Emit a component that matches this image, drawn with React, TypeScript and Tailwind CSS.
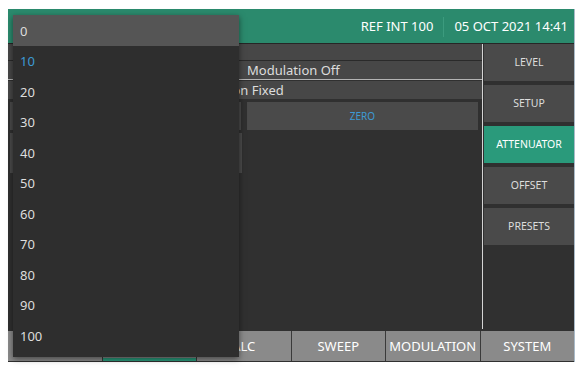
const levels = ["0", "10", "20", "30", "40", "50", "60", "70", "80", "90", "100"]

const sideButtons = ["LEVEL", "SETUP", "ATTENUATOR", "OFFSET", "PRESETS"]

// first two tabs sit under the open dropdown
const tabs = ["", "", "ALC", "SWEEP", "MODULATION", "SYSTEM"]

function AttenuationDropdown({ selected }: { selected: string }) {
  return (
    <div className="absolute left-[5px] top-[6px] w-[226px] bg-[#2e2e2e] pb-[6px] shadow-[0_2px_6px_rgba(0,0,0,0.5)]">
      {levels.map((lvl, i) => (
        <div
          key={lvl}
          className={
            "flex h-[30.5px] items-center pl-[7px] pt-[2px] text-[13px] " +
            (i === 0 ? "bg-[#555555] " : "") +
            (lvl === selected ? "text-[#3d9ad4]" : "text-[#dddddd]")
          }
        >
          {lvl}
        </div>
      ))}
    </div>
  )
}

export default function App() {
  return (
    <div className="min-h-screen bg-white pl-[8px] pt-[9px] font-['Noto_Sans',sans-serif]">
      <div className="relative flex h-[353px] w-[567px] flex-col border-r border-[#a9bac8] bg-[#303030]">
        {/* header */}
        <div className="flex h-[35px] items-center justify-end border-b border-[#262626] bg-[#2b8a6d] pr-[6px] pt-[2px] text-[13px] text-white">
          <span>REF INT 100</span>
          <span className="mx-[10px] h-[20px] w-px bg-[#3c9b7e]" />
          <span>05 OCT 2021 14:41</span>
        </div>

        {/* body */}
        <div className="flex h-[287px]">
          <div className="flex w-[474px] flex-col text-[13px] text-[#dddddd]">
            <div className="h-[17px] border-b border-[#2a2a2a] bg-[#474747]" />
            <div className="flex h-[19px] items-center border-b border-[#b4b4b4] bg-[#474747] pl-[239px] pt-px leading-none">
              Modulation Off
            </div>
            <div className="mt-px flex h-[18px] items-center bg-[#474747] pl-[168px] pt-px leading-none">
              Attenuation Fixed
            </div>
            <div className="mt-[3px] flex h-[28px] gap-[6px] pl-[2px]">
              <div className="w-[231px] bg-[#4a4a4a]" />
              <div className="flex w-[231px] items-center justify-center bg-[#4a4a4a] pt-px text-[10px] text-[#3d9ad4]">
                ZERO
              </div>
            </div>
            <div className="ml-[2px] mt-[3px] h-[40px] w-[232px] border-x-[3px] border-[#4a4a4a]" />
          </div>
          <div className="mb-[2px] w-px bg-[#d4d4d4]" />
          <div className="flex flex-1 flex-col gap-[4.5px] pl-px">
            {sideButtons.map((b) => (
              <div
                key={b}
                className={
                  "flex h-[36.5px] items-center justify-center pt-[2px] text-[10.5px] " +
                  (b === "ATTENUATOR" ? "bg-[#2a9a7b] text-white" : "bg-[#4a4a4a] text-[#dddddd]")
                }
              >
                {b}
              </div>
            ))}
          </div>
        </div>

        {/* bottom tabs */}
        <div className="grid h-[30px] grid-cols-6 gap-px bg-[#3a3a3a]">
          {tabs.map((t, i) => (
            <div
              key={i}
              className={
                "flex items-center justify-center bg-[#8a8a8a] pt-[2px] text-[13px] text-white " +
                (i === 1 ? "border-b-[3px] border-[#2a9a7b]" : "")
              }
            >
              {t}
            </div>
          ))}
        </div>

        <AttenuationDropdown selected="10" />
      </div>
    </div>
  )
}
